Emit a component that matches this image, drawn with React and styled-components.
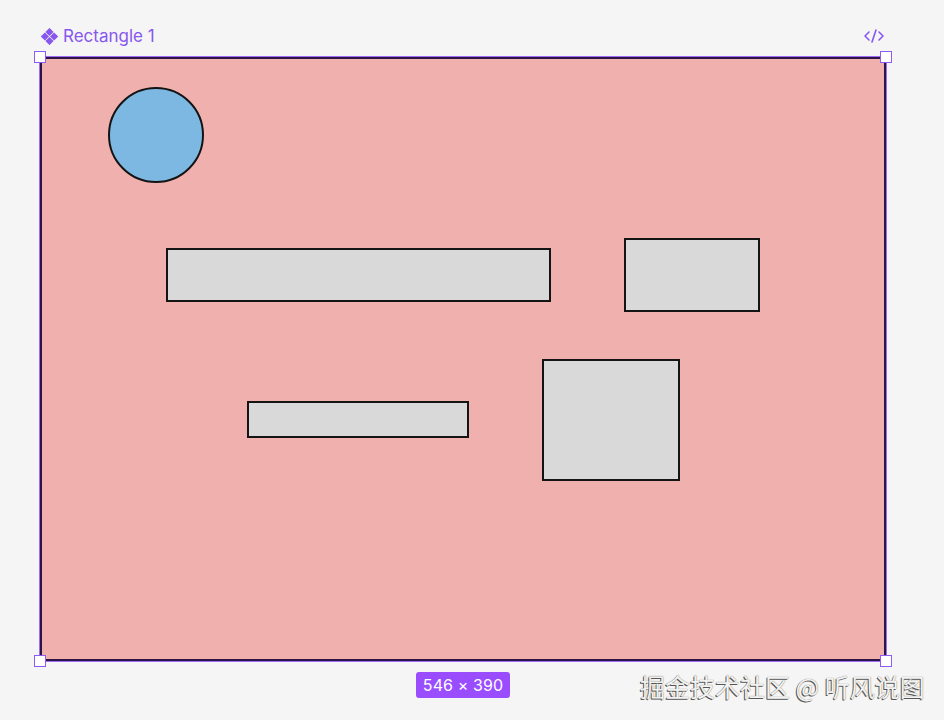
import React from "react";
import styled, { createGlobalStyle } from "styled-components";

const Global = createGlobalStyle`
  html, body { margin: 0; padding: 0; background: #f5f5f5; }
  body { font-family: Inter, "Noto Sans", sans-serif; }
  * { box-sizing: border-box; }
`;

const Page = styled.div`
  position: relative;
  width: 944px;
  height: 720px;
  padding: 26px 0 0 40px;
  display: flex;
  flex-direction: column;
`;

const Header = styled.div`
  width: 846px;
  height: 20px;
  display: flex;
  align-items: center;
  justify-content: space-between;
  margin-bottom: 11px;
`;

const Label = styled.div`
  display: flex;
  align-items: center;
  gap: 5px;
  font-size: 17px;
  color: #8757ee;
  padding-left: 1px;
`;

const CodeIcon = styled.svg`
  margin-right: 1px;
`;

const Frame = styled.div`
  position: relative;
  width: 846px;
  height: 604px;
  background: #f0b0ae;
  border: 2px solid #2c1546;
  box-shadow: 0 0 0 1px #9d6cf7;
`;

const Handle = styled.div`
  position: absolute;
  width: 12px;
  height: 12px;
  background: #fff;
  border: 1.5px solid #8d5cf6;
  ${(p) => (p.$top ? "top: -8px;" : "bottom: -8px;")}
  ${(p) => (p.$left ? "left: -8px;" : "right: -8px;")}
`;

const Shape = styled.div`
  position: absolute;
  border: 2px solid #141414;
  background: ${(p) => p.$fill || "#d9d9d9"};
  border-radius: ${(p) => (p.$round ? "50%" : "0")};
`;

const Footer = styled.div`
  width: 846px;
  display: flex;
  justify-content: center;
  margin-top: 11px;
`;

const Badge = styled.div`
  height: 26px;
  padding: 0 7px;
  border-radius: 3px;
  background: #9a4cff;
  color: #fff;
  font-size: 16px;
  display: flex;
  align-items: center;
  letter-spacing: 0.1px;
`;

const Watermark = styled.div`
  position: absolute;
  left: 640px;
  top: 670px;
  font-family: "Noto Sans CJK SC", sans-serif;
  font-size: 25px;
  line-height: 32px;
  color: #f2f2f2;
  text-shadow: -1px 1px 0 #555, 0 0 1px #555;
`;

const shapes = [
  { l: 66, t: 28, w: 96, h: 96, round: true, fill: "#7db8e3" },
  { l: 124, t: 189, w: 385, h: 54 },
  { l: 582, t: 179, w: 136, h: 74 },
  { l: 205, t: 342, w: 222, h: 37 },
  { l: 500, t: 300, w: 138, h: 122 },
];

export default function App() {
  return (
    <>
      <Global />
      <Page>
        <Header>
          <Label>
            <svg width="17" height="17" viewBox="0 0 16 16">
              <g fill="#8757ee">
                <rect x="5.3" y="1" width="5.4" height="5.4" transform="rotate(45 8 3.7)" />
                <rect x="5.3" y="9.6" width="5.4" height="5.4" transform="rotate(45 8 12.3)" />
                <rect x="1" y="5.3" width="5.4" height="5.4" transform="rotate(45 3.7 8)" />
                <rect x="9.6" y="5.3" width="5.4" height="5.4" transform="rotate(45 12.3 8)" />
              </g>
            </svg>
            Rectangle 1
          </Label>
          <CodeIcon width="22" height="18" viewBox="0 0 22 18">
            <g fill="none" stroke="#8757ee" strokeWidth="1.6" strokeLinecap="round" strokeLinejoin="round">
              <path d="M6 5 L2 9 L6 13" />
              <path d="M16 5 L20 9 L16 13" />
              <path d="M13 3 L9 15" />
            </g>
          </CodeIcon>
        </Header>
        <Frame>
          {shapes.map((s, i) => (
            <Shape
              key={i}
              $round={s.round}
              $fill={s.fill}
              style={{ left: s.l, top: s.t, width: s.w, height: s.h }}
            />
          ))}
          <Handle $top $left />
          <Handle $top />
          <Handle $left />
          <Handle />
        </Frame>
        <Footer>
          <Badge>546 × 390</Badge>
        </Footer>
        <Watermark>掘金技术社区 @ 听风说图</Watermark>
      </Page>
    </>
  );
}
